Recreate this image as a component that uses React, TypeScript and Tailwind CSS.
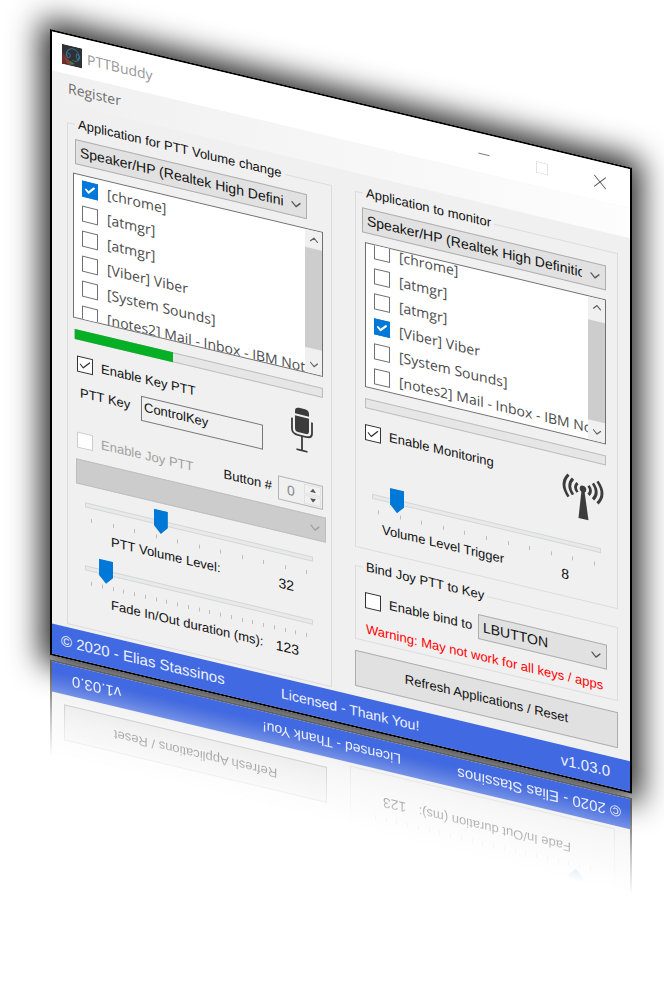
import React, { useId } from 'react';
import { Check, ChevronDown, ChevronUp, Minus, X } from 'lucide-react';

const sansFont = 'font-["Liberation_Sans",sans-serif]';
const segoeFont = 'font-["Open_Sans","Noto_Sans",sans-serif]';

const sessions = ['[chrome]', '[atmgr]', '[atmgr]', '[Viber] Viber', '[System Sounds]', '[notes2] Mail - Inbox - IBM Notes'];

interface CheckProps {
    label: string;
    checked?: boolean;
    disabled?: boolean;
}

const CheckOption: React.FC<CheckProps> = ({ label, checked = false, disabled = false }) => (
    <label className={`flex h-5 items-center gap-2 whitespace-nowrap ${disabled ? 'text-[#a0a0a0]' : ''}`}>
        <span className="grid size-4 shrink-0">
            <input
                type="checkbox"
                defaultChecked={checked}
                disabled={disabled}
                className="peer col-start-1 row-start-1 size-4 appearance-none border border-[#333] bg-white disabled:border-[#ccc]"
            />
            <Check
                className="pointer-events-none invisible col-start-1 row-start-1 size-4 p-px text-[#333] peer-checked:visible"
                strokeWidth={2}
            />
        </span>
        {label}
    </label>
);

const SessionItem: React.FC<CheckProps> = ({ label, checked = false }) => (
    <label className="flex h-[25px] shrink-0 items-center gap-[9px] whitespace-nowrap">
        <span className="grid size-4 shrink-0">
            <input
                type="checkbox"
                defaultChecked={checked}
                className="peer col-start-1 row-start-1 size-4 appearance-none border border-[#707070] bg-white checked:border-[#0078d7] checked:bg-[#0078d7]"
            />
            <Check
                className="pointer-events-none invisible col-start-1 row-start-1 size-4 p-0.5 text-white peer-checked:visible"
                strokeWidth={4}
            />
        </span>
        {label}
    </label>
);

interface ListProps {
    name: string;
    checkedIndex: number;
    scrolled?: boolean;
}

const SessionList: React.FC<ListProps> = ({ name, checkedIndex, scrolled = false }) => (
    <div role="group" aria-label={name} className="flex h-[145px] overflow-hidden border border-[#707070] bg-white">
        <div className={`flex min-w-0 flex-1 flex-col overflow-hidden pl-2 text-[14px] text-[#4b4b4b] ${segoeFont} ${scrolled ? '-mt-[7px]' : ''}`}>
            {sessions.map((session, index) => (
                <SessionItem key={index} label={session} checked={index === checkedIndex} />
            ))}
        </div>
        <div className="flex w-[17px] shrink-0 flex-col bg-[#f0f0f0] text-[#606060]">
            <button type="button" aria-label="Scroll up" className="grid h-[18px] place-items-center">
                <ChevronUp className="size-3.5" strokeWidth={2} />
            </button>
            <div className={`flex-1 ${scrolled ? 'pt-[5px]' : ''}`}>
                <div className="h-[100px] bg-[#cdcdcd]" />
            </div>
            <button type="button" aria-label="Scroll down" className="grid h-[18px] place-items-center">
                <ChevronDown className="size-3.5" strokeWidth={2} />
            </button>
        </div>
    </div>
);

interface ComboProps {
    name: string;
    value: string;
    disabled?: boolean;
}

const Combo: React.FC<ComboProps> = ({ name, value, disabled = false }) => (
    <div className="grid">
        <select
            aria-label={name}
            disabled={disabled}
            className="col-start-1 row-start-1 h-[25px] w-full min-w-0 appearance-none border border-[#adadad] bg-[#e1e1e1] pr-[23px] pl-1 text-[14px] disabled:border-[#bfbfbf] disabled:bg-[#ccc] disabled:opacity-100"
        >
            <option>{value}</option>
        </select>
        <ChevronDown
            className={`pointer-events-none col-start-1 row-start-1 mr-[3px] size-4 self-center justify-self-end ${disabled ? 'text-[#a0a0a0]' : 'text-[#555]'}`}
            strokeWidth={2}
        />
    </div>
);

const Meter: React.FC<{ name: string; percent: number }> = ({ name, percent }) => (
    <div
        role="progressbar"
        aria-label={name}
        aria-valuenow={percent}
        className="h-2.5 border border-[#bcbcbc] bg-[#e6e6e6]"
    >
        <div className="-mt-px h-2.5 bg-[#06b025]" style={{ width: `${percent}%` }} />
    </div>
);

interface TrackBarProps {
    label: string;
    value: number;
    max: number;
    ticks: number;
    labelClass: string;
    valueClass: string;
}

const TrackBar: React.FC<TrackBarProps> = ({ label, value, max, ticks, labelClass, valueClass }) => {
    const id = useId();
    return (
        <div>
            <input
                id={id}
                type="range"
                min={0}
                max={max}
                defaultValue={value}
                className="block h-6 w-full appearance-none bg-transparent [&::-webkit-slider-runnable-track]:h-[5px] [&::-webkit-slider-runnable-track]:border [&::-webkit-slider-runnable-track]:border-[#d6d6d6] [&::-webkit-slider-runnable-track]:bg-[#e7eaea] [&::-webkit-slider-thumb]:-mt-[11px] [&::-webkit-slider-thumb]:h-6 [&::-webkit-slider-thumb]:w-3.5 [&::-webkit-slider-thumb]:appearance-none [&::-webkit-slider-thumb]:bg-[#0078d7] [&::-webkit-slider-thumb]:[clip-path:polygon(0_0,100%_0,100%_70%,50%_100%,0_70%)]"
            />
            <div className="mx-1.5 mt-px flex h-1 justify-between">
                {Array.from({ length: ticks }, (_, i) => (
                    <span key={i} className="w-px bg-[#bdbdbd]" />
                ))}
            </div>
            <div className="mt-[5px] flex h-5 items-center justify-between leading-5 whitespace-nowrap">
                <label htmlFor={id} className={labelClass}>
                    {label}
                </label>
                <output htmlFor={id} className={`text-[14px] ${valueClass}`}>
                    {value}
                </output>
            </div>
        </div>
    );
};

const AppIcon: React.FC = () => (
    <svg viewBox="0 0 20 20" className="size-5" aria-hidden="true">
        <rect width="20" height="20" fill="#2e3237" />
        <path d="M0 8l9 9-9 3z" fill="#6e2f2c" />
        <path d="M2 12l9 5-5 3z" fill="#8c4030" />
        <path d="M8 15l5 2-4 2z" fill="#3f7d3c" />
        <path
            d="M5.500 11.500C3 7.500 6 3 10.500 2.500c4.500 0 8 4.500 6 8.500M5 7.500q-2 3 1 5 3-1 2-4zM14.500 7q-1 3 1 5 3-1 2-4zM10.500 14c2.500 1 5.500 0 6.500-2.500"
            fill="none"
            stroke="#3b6f8a"
            strokeWidth="1"
        />
    </svg>
);

const Microphone: React.FC = () => (
    <svg viewBox="0 0 22 46" className="h-[46px] w-[22px] shrink-0" fill="none" stroke="#3c3c3c" aria-hidden="true">
        <path d="M4 8V5.500q0-4 4-4h6q4 0 4 4V8z" fill="#3c3c3c" stroke="none" />
        <path d="M4 10h14v13q0 3-3 3H7q-3 0-3-3z" fill="#3c3c3c" stroke="none" />
        <path d="M1 13v11q0 5 6.500 5h7q6.500 0 6.500-5V13" strokeWidth="1.800" />
        <path d="M11 29V43M5.500 43.500h11" strokeWidth="1.800" />
    </svg>
);

const Antenna: React.FC = () => (
    <svg viewBox="0 0 42 46" className="h-[46px] w-[42px] shrink-0" fill="none" stroke="#3c3c3c" aria-hidden="true">
        <circle cx="21" cy="15" r="3.300" fill="#3c3c3c" stroke="none" />
        <path d="M19.500 17h3l4 28h-10z" fill="#3c3c3c" stroke="none" />
        <path d="M15.500 10.500q-4 4.500 0 9M11 7q-6.500 8 0 16M6.500 4q-9 11 0 22" strokeWidth="2.800" />
        <path d="M26.500 10.500q4 4.500 0 9M31 7q6.500 8 0 16M35.500 4q9 11 0 22" strokeWidth="2.800" />
    </svg>
);

const Group: React.FC<{ title: string; className?: string; children: React.ReactNode }> = ({ title, className = '', children }) => (
    <fieldset className={`min-w-0 border border-[#dcdcdc] ${className}`}>
        <legend className="ml-[7px] h-5 px-[3px] leading-5 whitespace-nowrap">{title}</legend>
        {children}
    </fieldset>
);

const BuddyWindow: React.FC<{ edgeClass: string }> = ({ edgeClass }) => {
    const keyId = useId();
    const buttonId = useId();
    return (
        <div className={`flex w-full flex-col border-2 bg-[#f0f0f0] text-[13px] text-[#111] ${edgeClass} ${sansFont}`}>
            <header className="flex h-[39px] items-center bg-white pr-px pl-2.5">
                <AppIcon />
                <h1 className={`ml-[5px] flex-1 text-[14px] text-[#999] ${segoeFont}`}>PTTBuddy</h1>
                <button type="button" aria-label="Minimize" className="grid w-[58px] place-items-center text-[#555]">
                    <Minus className="size-[18px]" strokeWidth={1} />
                </button>
                <button type="button" aria-label="Maximize" className="grid w-[58px] place-items-center">
                    <svg viewBox="0 0 12 12" className="size-3">
                        <path d="M.5.5h11v11H.5z" fill="none" stroke="#e2e2e2" />
                    </svg>
                </button>
                <button type="button" aria-label="Close" className="grid w-[58px] place-items-center text-[#555]">
                    <X className="size-[22px]" strokeWidth={1} />
                </button>
            </header>
            <nav className={`flex h-[30px] items-center bg-linear-to-r from-[#f0f0f0] to-[#fdfdfd] pb-1 pl-4 text-[14px] text-[#6e6e6e] ${segoeFont}`}>
                <button type="button">Register</button>
            </nav>

            <main className="flex gap-[23px] pt-2 pr-3 pb-[3px] pl-[15px]">
                <Group title="Application for PTT Volume change" className="flex-1 pb-[18px]">
                    <div className="mt-[5px] mr-6 ml-[7px]">
                        <Combo name="PTT output device" value="Speaker/HP (Realtek High Definition Audio)" />
                    </div>
                    <div className="mt-[9px] mr-2 ml-[5px]">
                        <SessionList name="Applications to change" checkedIndex={0} />
                    </div>
                    <div className="mt-[11px] mr-2 ml-[6px]">
                        <Meter name="PTT level" percent={39.5} />
                    </div>
                    <div className="mt-3.5 mr-[18px] ml-[9px] flex items-start justify-between">
                        <div>
                            <CheckOption label="Enable Key PTT" checked />
                            <div className="mt-[7px] ml-[3px] flex">
                                <label htmlFor={keyId} className="w-[61px] leading-6">
                                    PTT Key
                                </label>
                                <input
                                    id={keyId}
                                    type="text"
                                    readOnly
                                    defaultValue="ControlKey"
                                    className="h-[25px] w-[122px] border border-[#777] bg-[#f0f0f0] px-0.5 pb-1"
                                />
                            </div>
                        </div>
                        <Microphone />
                    </div>
                    <div className="mt-[22px] mr-2 ml-[9px] flex h-6 items-center justify-between">
                        <CheckOption label="Enable Joy PTT" disabled />
                        <div className="flex items-center gap-1.5">
                            <label htmlFor={buttonId} className="whitespace-nowrap">
                                Button #
                            </label>
                            <div className="flex h-6 w-[45px] border border-[#b4b4b4] p-px">
                                <input
                                    id={buttonId}
                                    type="text"
                                    disabled
                                    defaultValue="0"
                                    className="w-6 min-w-0 pl-[7px] text-[14px] text-[#8a8a8a]"
                                />
                                <div className="flex flex-1 flex-col gap-px">
                                    <button type="button" aria-label="Increase" className="grid flex-1 place-items-center border border-[#e0e0e0]">
                                        <svg viewBox="0 0 6 4" className="h-1 w-1.5">
                                            <path d="M0 4l3-4 3 4z" fill="#555" />
                                        </svg>
                                    </button>
                                    <button type="button" aria-label="Decrease" className="grid flex-1 place-items-center border border-[#e0e0e0]">
                                        <svg viewBox="0 0 6 4" className="h-1 w-1.5">
                                            <path d="M0 0l3 4 3-4z" fill="#555" />
                                        </svg>
                                    </button>
                                </div>
                            </div>
                        </div>
                    </div>
                    <div className="mt-[7px] mr-[5px] ml-2">
                        <Combo name="Joystick" value="" disabled />
                    </div>
                    <div className="mt-[7px] mr-[18px] ml-[17px] flex flex-col gap-[9px]">
                        <TrackBar label="PTT Volume Level:" value={32} max={100} ticks={11} labelClass="ml-[26px]" valueClass="mr-[19px]" />
                        <TrackBar label="Fade In/Out duration (ms):" value={123} max={2000} ticks={21} labelClass="ml-[26px]" valueClass="mr-[14px]" />
                    </div>
                </Group>

                <div className="flex min-w-0 flex-1 flex-col">
                    <Group title="Application to monitor">
                        <div className="mt-[5px] mr-[11px] ml-1.5">
                            <Combo name="Monitored output device" value="Speaker/HP (Realtek High Definition Audio)" />
                        </div>
                        <div className="mt-[9px] mr-[11px] ml-[9px]">
                            <SessionList name="Applications to monitor" checkedIndex={3} scrolled />
                        </div>
                        <div className="mt-[11px] mr-[11px] ml-[9px]">
                            <Meter name="Monitored level" percent={0} />
                        </div>
                        <div className="mt-3.5 mr-[13px] ml-[9px] flex h-12 items-start justify-between">
                            <CheckOption label="Enable Monitoring" checked />
                            <Antenna />
                        </div>
                        <div className="mt-3 mr-4 mb-3 ml-4">
                            <TrackBar label="Volume Level Trigger" value={8} max={100} ticks={11} labelClass="ml-[10px]" valueClass="mr-8" />
                        </div>
                    </Group>
                    <Group title="Bind Joy PTT to Key" className="mt-2">
                        <div className="mt-2.5 mr-2.5 ml-[9px] flex h-[25px] items-center justify-between">
                            <CheckOption label="Enable bind to" />
                            <div className="w-[129px]">
                                <Combo name="Bound key" value="LBUTTON" />
                            </div>
                        </div>
                        <p className="mt-[7px] mb-px ml-2.5 leading-5 whitespace-nowrap text-[#ff0000]">
                            Warning: May not work for all keys / apps
                        </p>
                    </Group>
                    <button type="button" className="mt-[11px] h-9 border border-[#adadad] bg-[#e1e1e1]">
                        Refresh Applications / Reset
                    </button>
                </div>
            </main>

            <footer className="grid h-[30px] grid-cols-[220px_1fr_auto] items-center bg-[#4169e1] pr-[20px] pl-[9px] text-[15px] text-[#eef2ff]">
                <span>© 2020 - Elias Stassinos</span>
                <span className="text-[14px]">Licensed - Thank You!</span>
                <span>v1.03.0</span>
            </footer>
        </div>
    );
};

const App: React.FC = () => (
    <div className="min-h-screen overflow-hidden bg-white pt-[29px] pr-8 pl-[50px]">
        <div className="origin-top-left skew-y-[13.4deg]">
            <div className="shadow-[0_0_30px_9px_rgba(0,0,0,0.85)]">
                <BuddyWindow edgeClass="border-black" />
            </div>
            <div
                aria-hidden="true"
                inert
                className="relative mt-1 h-[110px] overflow-hidden mask-[linear-gradient(to_bottom,black_10%,rgba(0,0,0,0.4)_50%,transparent_88%)]"
            >
                <div className="rotate-180">
                    <BuddyWindow edgeClass="border-black/60" />
                </div>
            </div>
        </div>
    </div>
);

export default App;
